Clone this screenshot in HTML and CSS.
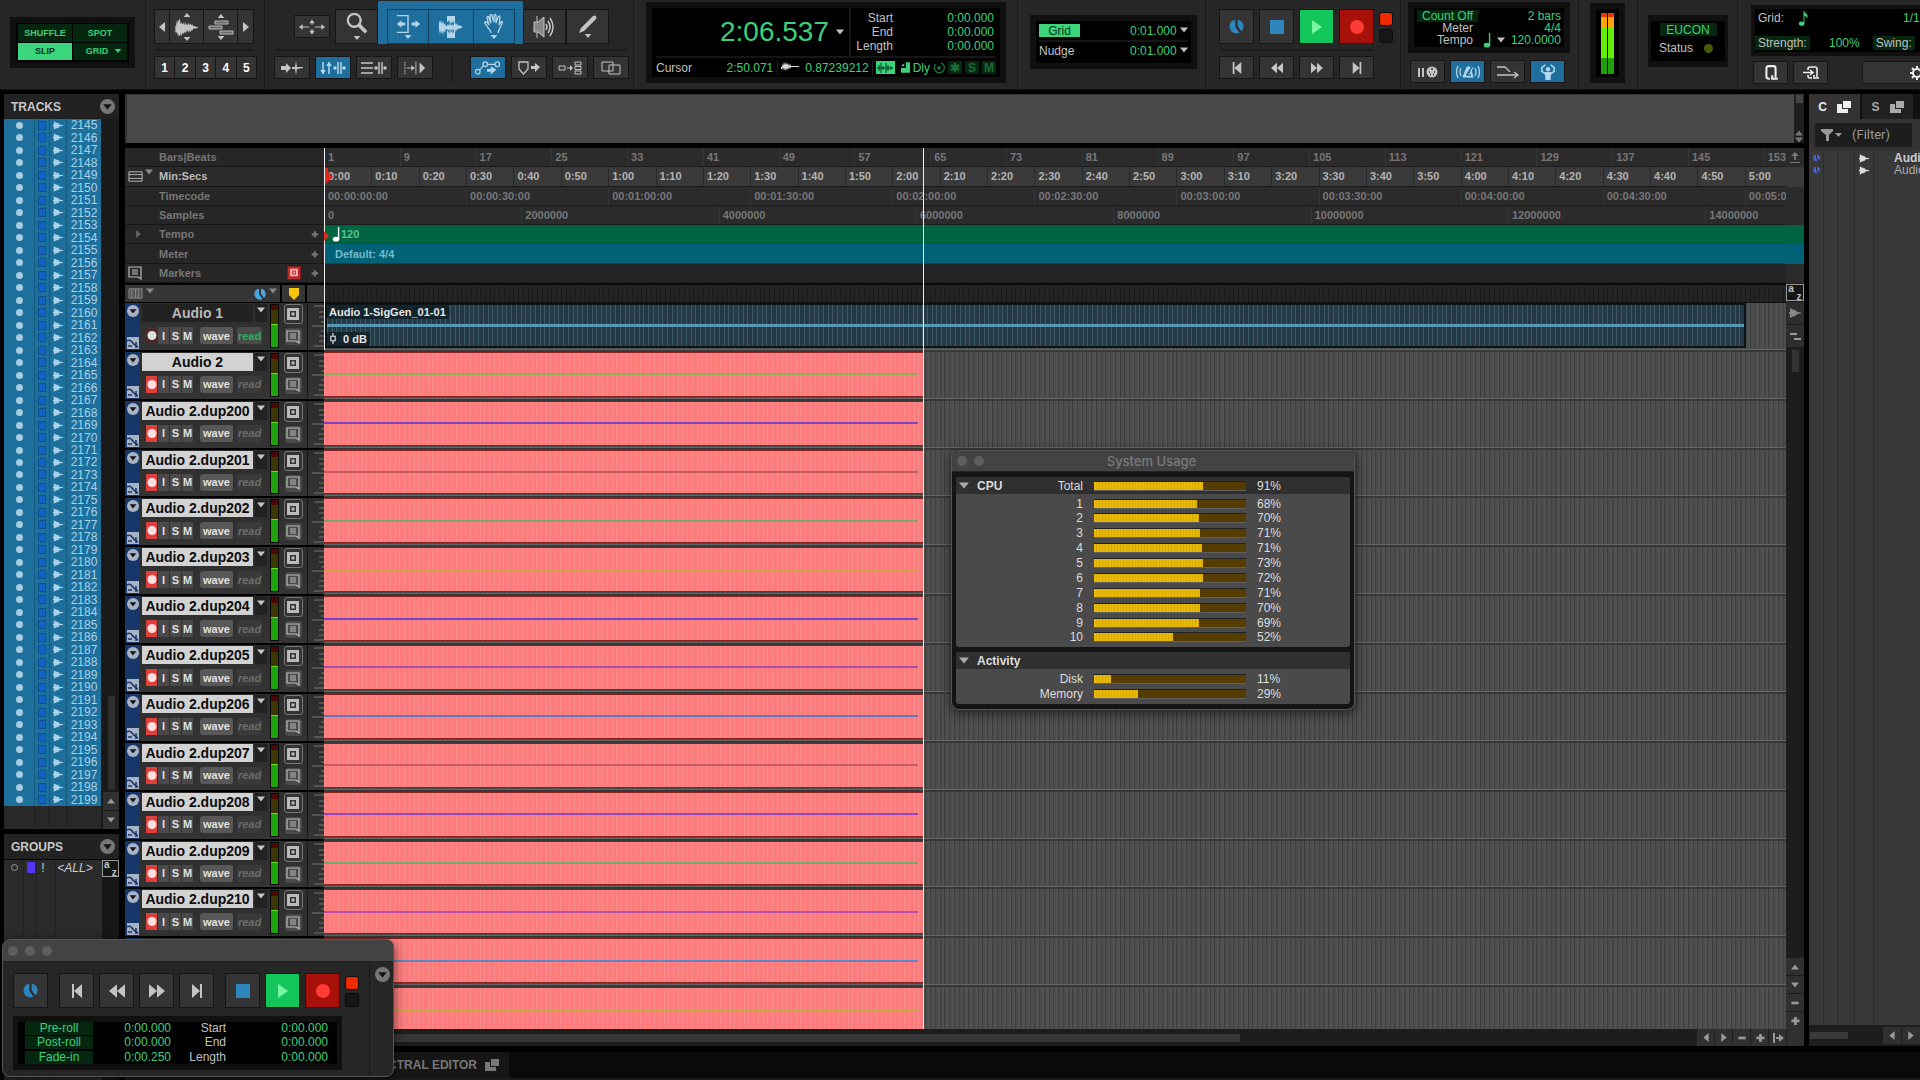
FILE: index.html
```
<!DOCTYPE html>
<html lang="en">
<head>
    <meta charset="UTF-8">
    <meta name="viewport" content="width=device-width, initial-scale=1.0">
    <title>Edit Window</title>
    <link rel="stylesheet" href="styles.css">
</head>
<body>
    <!-- icons -->
    <svg class="sprite" aria-hidden="true">
        <symbol id="down" viewBox="0 0 10 6"><path d="M0 0h10L5 6z"/></symbol>
        <symbol id="up" viewBox="0 0 10 6"><path d="M0 6h10L5 0z"/></symbol>
        <symbol id="left" viewBox="0 0 6 10"><path d="M6 0v10L0 5z"/></symbol>
        <symbol id="right" viewBox="0 0 6 10"><path d="M0 0v10l6-5z"/></symbol>
        <symbol id="minus" viewBox="0 0 10 10"><path d="M1 4h8v3H1z"/></symbol>
        <symbol id="plus" viewBox="0 0 10 10"><path d="M4 1h3v3h3v3H7v3H4V7H1V4h3z"/></symbol>
        <symbol id="jump" viewBox="0 0 12 10"><path d="M1 0h2v10H1zM4 4h3V1l5 4-5 4V6H4z"/></symbol>
        <symbol id="wave" viewBox="0 0 12 10"><path d="M0 4h1V0l2 1 1 1 1-1 1 2 1-1 1 2 4 .5v1L8 6 7 8 6 7 5 9 4 8 3 9l-2 1V6H0z"/></symbol>
        <symbol id="cwave" viewBox="0 0 18 12"><path d="M0 5h1V2l1 2 1-4 1 3 1-3 1 3 1-2 1 3 1-2 1 2h8v1h-8l-1 2-1-2-1 3-1-2-1 3-1-3-1 3-1-4-1 3V7H0z"/></symbol>
        <symbol id="bigwave" viewBox="0 0 26 20"><path d="M0 9h1V2l1 5 1-5 1 2 1-4 1 7 1-2 1 2 1-2 1 3 1-4 1 4 1-2 1 2 1-3 1 3 1-2 1 2 1-1 1 2 5 1v1l-5 1-1 2-1-1-1 3-1-2-1 2-1-3-1 3-1-2-1 4-1-3-1 3-1-2-1 4-1-3-1 5-1-4-1 2-1-4H0z"/></symbol>
        <symbol id="chipwave" viewBox="0 0 18 12"><path d="M1 6h16M3 3v6M5 1v10M7 4v4M10 1v10M12 3v6M15 4v4" fill="none" stroke="currentColor"/></symbol>
        <symbol id="bricks" viewBox="0 0 26 14"><path d="M7 1h13v3H7zM1 6h13v3H1zM12 11h13v3H12z" fill="#666" stroke="#bbb"/></symbol>
        <symbol id="arrows4" viewBox="0 0 28 16"><path d="M1 8h10M17 8h10M14 2v4M14 10v4" fill="none" stroke="currentColor"/><path d="M0 8l4-3v6zM28 8l-4-3v6zM14 0l3 4h-6zM14 16l3-4h-6z"/></symbol>
        <symbol id="zoomer" viewBox="0 0 24 24"><circle cx="9" cy="8" r="7" fill="none" stroke="currentColor" stroke-width="2.5"/><path d="M14 13l8 8" stroke="currentColor" stroke-width="4"/></symbol>
        <symbol id="trim" viewBox="0 0 28 20"><path d="M2 1h12v18H2" fill="none" stroke="currentColor" stroke-width="1.5"/><path d="M2 10l5-4v2.500h4v3H7V14zM27 10l-5-4v2.500h-4v3h4V14z"/></symbol>
        <symbol id="selector" viewBox="0 0 24 22"><path d="M8 0h8v7h-1l-1-2-1 3-1-3-1 4-1-5-1 2H8zM8 22h8v-7h-1l-1 3-1-4-1 3-1-3-1 4-1-3H8z"/><path d="M0 4l1 3 1-3 1 4 1-3 1 4 1-2 1 3h1l1-2 1 2 1-3 1 3 1-2 1 2 2-4 1 3 1-2 1 3 1-1 4 2-4 2-1-1-1 3-1-2-1 4-2-4-1 2-1-2-1 3-1-3-1 2-1-2H7l-1 4-1-3-1 5-1-4-1 3-1-4-1 4z"/></symbol>
        <symbol id="hand" viewBox="0 0 20 20"><path d="M7 19c0-3-3-4-4-7-1-2-3-3-2-4s3 1 4 3L3 4c0-2 2-2 2 0l2 5-1-7c0-2 2-2 2 0l2 6V2c0-2 2-2 2 0v7l2-6c1-2 2-1 2 0l-1 8 2-3c1-1 2 0 1 1-1 4-3 5-4 10" fill="none" stroke="currentColor" stroke-width="1.300"/></symbol>
        <symbol id="speaker" viewBox="0 0 22 24"><path d="M3 1v22" stroke="currentColor"/><path d="M0 7h4l6-5v20l-6-5H0z" fill="#888" stroke="currentColor"/><path d="M12 9q2 3 0 6M14 6q4 6 0 12M16 3q6 9 0 18" fill="none" stroke="currentColor" stroke-width="1.500"/></symbol>
        <symbol id="pencil" viewBox="0 0 18 18"><path d="M0 18l2-5L14 1q2-1 3 0t0 3L5 16zM3 14l1 1"/></symbol>
        <symbol id="tabto" viewBox="0 0 22 14"><path d="M0 5h5V2l5 5-5 5V9H0zM11 6h3l1-6 1 6h6v1l-6 1-1 6-1-6h-3z"/></symbol>
        <symbol id="linktl" viewBox="0 0 26 14"><path d="M3 1v12M9 1v12M18 1v12M21 1v12" stroke="currentColor" stroke-width="1.500"/><path d="M0 9h6l-3 4zM6 5h6L9 1z"/><circle cx="15" cy="7" r="1.800"/><circle cx="24" cy="7" r="1.800"/></symbol>
        <symbol id="linktr" viewBox="0 0 26 14"><path d="M0 2h12M0 7h12M0 12h12M18 1v12M21 1v12" stroke="currentColor" stroke-width="1.500"/><circle cx="15" cy="7" r="1.800"/><circle cx="24" cy="7" r="1.800"/></symbol>
        <symbol id="insertion" viewBox="0 0 24 14"><path d="M1 0v14" stroke="currentColor" stroke-dasharray="2 1"/><path d="M3 7h8M13 0v14" stroke="currentColor"/><path d="M8 4l4 3-4 3zM17 1v12l6-6z"/></symbol>
        <symbol id="automation" viewBox="0 0 28 14"><g fill="none" stroke="currentColor" stroke-width="1.300"><circle cx="3" cy="11" r="2.500"/><circle cx="11" cy="3" r="2.500"/><circle cx="24" cy="3" r="2.500"/><path d="M5 9l4-4M13 3h9"/></g><path d="M13 8h4V5l6 4-6 5v-3h-4z"/></symbol>
        <symbol id="markerto" viewBox="0 0 22 14"><path d="M1 1h9v7l-4.500 5L1 8z" fill="none" stroke="currentColor" stroke-width="1.300"/><path d="M13 5h4V2l5 4-5 5V8h-4z"/></symbol>
        <symbol id="mirror" viewBox="0 0 24 14"><path d="M1 5h6v4H1zM17 1h6v3h-6zM17 5.500h6v3h-6zM17 10h6v3h-6zM9 7h4" fill="none" stroke="currentColor"/><path d="M12 4l3 3-3 3z"/></symbol>
        <symbol id="layered" viewBox="0 0 20 14"><path d="M1 1h11v9H1zM8 4h11v9H8z" fill="none" stroke="currentColor"/></symbol>
        <symbol id="clock" viewBox="0 0 16 16"><circle cx="8" cy="8" r="7.500"/><path d="M8 0v8l5 7" fill="none" stroke="#2e2e2e" stroke-width="2.500"/></symbol>
        <symbol id="stop" viewBox="0 0 14 14"><path d="M0 0h14v14H0z"/></symbol>
        <symbol id="play" viewBox="0 0 10 14"><path d="M0 0l10 7-10 7z"/></symbol>
        <symbol id="rec" viewBox="0 0 14 14"><circle cx="7" cy="7" r="7"/></symbol>
        <symbol id="rtz" viewBox="0 0 10 14"><path d="M0 0h2v14H0zM10 0v14L2 7z"/></symbol>
        <symbol id="rew" viewBox="0 0 14 12"><path d="M7 0v12L0 6zM14 0v12L7 6z"/></symbol>
        <symbol id="ffw" viewBox="0 0 14 12"><path d="M0 0l7 6-7 6zM7 0l7 6-7 6z"/></symbol>
        <symbol id="end" viewBox="0 0 10 14"><path d="M8 0h2v14H8zM0 0l8 7-8 7z"/></symbol>
        <symbol id="note" viewBox="0 0 8 16"><path d="M6 0h1.500v13H6z"/><ellipse cx="4" cy="13" rx="3.500" ry="2.500"/></symbol>
        <symbol id="note16" viewBox="0 0 10 16"><path d="M5 0h1q0 2 2 3t1 5q0-2-3-3v8H5zM6 4q3 1 4 4"/><ellipse cx="3" cy="13.500" rx="3" ry="2.200"/></symbol>
        <symbol id="waitnote" viewBox="0 0 20 12"><path d="M0 2h2v9H0zM4 2h2v9H4z"/><circle cx="14" cy="6" r="5.500"/><path d="M11 6h1M13 3h2M16 6h1M12 8.500h1M15 8.500h1" stroke="#333" stroke-width="1.500"/></symbol>
        <symbol id="metronome" viewBox="0 0 26 14"><path d="M3 1q-3 6 0 12M6 3q-2 4 0 8M23 1q3 6 0 12M20 3q2 4 0 8" fill="none" stroke="currentColor" stroke-width="1.300"/><path d="M12 2h3l3 10H8zM12 9h3l3-7" stroke="currentColor"/><path d="M12 9l5-7M11 10h5" stroke="#1e6e9e" stroke-width="1.300"/></symbol>
        <symbol id="merge" viewBox="0 0 22 14"><path d="M0 2h8l5 5M0 10h20M17 7l4 3-4 3" fill="none" stroke="currentColor" stroke-width="1.300"/></symbol>
        <symbol id="conductor" viewBox="0 0 18 16"><path d="M6 0L2 3v4l5 4v5h4v-5l5-4V3l-4-3" fill="none" stroke="currentColor" stroke-width="1.800"/><circle cx="9" cy="5" r="2.500"/><path d="M5 8h8l-2 8H7z"/></symbol>
        <symbol id="quant" viewBox="0 0 12 14"><path d="M5 12H4q-2 0-2-2V3q0-2 2-2h4q2 0 2 2v8M7 9v3h5" fill="none" stroke="currentColor" stroke-width="1.800"/></symbol>
        <symbol id="inquant" viewBox="0 0 16 14"><path d="M5 4V3q0-2 2-2h5q2 0 2 2v8M11 9v3h5M9 12H7q-2 0-2-2V9M0 6.500h10M7 4l3 2.500L7 9" fill="none" stroke="currentColor" stroke-width="1.600"/></symbol>
        <symbol id="popout" viewBox="0 0 14 12"><path d="M0 3h5v5h6v4H0zM6 0h8v7H6z"/></symbol>
        <symbol id="funnel" viewBox="0 0 12 12"><path d="M0 0h12v2L8 6v6H5V6L0 2z"/></symbol>
        <symbol id="rows" viewBox="0 0 16 12"><path d="M1 1h14v10H1zM1 4h14M1 8h14" fill="none" stroke="currentColor"/></symbol>
        <symbol id="cols" viewBox="0 0 16 12"><path d="M1 1h14v10H1zM4 1v10M8 1v10M11 1v10" fill="#555" stroke="currentColor"/></symbol>
        <symbol id="comment" viewBox="0 0 14 14"><path d="M1 1h12v12l-3-2H1zM4 4h6M4 6h6M4 8h6" fill="none" stroke="currentColor" stroke-width="1.200"/></symbol>
        <symbol id="frame" viewBox="0 0 14 14"><path d="M1 1h12v12H1zM4 4v6h6V4z" fill-rule="evenodd"/><path d="M5.500 5.500h3v3h-3z"/></symbol>
        <symbol id="flag" viewBox="0 0 10 12"><path d="M0 0h10v7l-5 5-5-5z"/></symbol>
        <symbol id="menu" viewBox="0 0 14 14"><circle cx="7" cy="7" r="7"/><path d="M3 5h8l-4 5z" fill="#141414"/></symbol>
        <symbol id="elastic" viewBox="0 0 12 12"><path d="M0 0h12v12H0z"/><path d="M0 4q3-2 5 1t6 5M9 5v6M1 9h4" fill="none" stroke="#17366a" stroke-width="1.500"/></symbol>
        <symbol id="scale" viewBox="0 0 12 42"><path d="M2 1h10M7 7h5M7 12h5M9 17h3M0 21h12M9 26h3M7 31h5M7 36h5M2 41h10" stroke="#777" fill="none"/></symbol>
        <symbol id="fader" viewBox="0 0 6 10"><path d="M3 0v3M3 7v3M1 3h4v4H1z" fill="none" stroke="currentColor"/></symbol>
        <symbol id="upload" viewBox="0 0 10 12"><path d="M5 0l4 4H6v4H4V4H1zM0 10h10v1H0z"/></symbol>
        <symbol id="ring" viewBox="0 0 12 12"><path d="M3 2a5 5 0 1 0 5-1" fill="none" stroke="currentColor" stroke-width="1.500"/><circle cx="6" cy="6" r="2"/></symbol>
        <symbol id="corner" viewBox="0 0 11 13"><path d="M6 0h5v13H0V7h6zM0 5l4-4v4z"/></symbol>
        <symbol id="gear" viewBox="0 0 14 14"><circle cx="7" cy="7" r="4" fill="none" stroke="currentColor" stroke-width="2"/><path d="M7 0v3M7 11v3M0 7h3M11 7h3M2 2l2 2M10 10l2 2M12 2l-2 2M4 10l-2 2" stroke="currentColor" stroke-width="2"/></symbol>
    </svg>

    <header class="toolbar">
        <section class="sec modes-sec">
            <div class="lcd modes">
                <button>SHUFFLE</button>
                <button>SPOT</button>
                <button class="lit">SLIP</button>
                <button>GRID <svg class="i-tri"><use href="#down"/></svg></button>
            </div>
        </section>

        <section class="sec presets-sec">
            <div class="row1 joined">
                <button class="b15"><svg class="i-side"><use href="#left"/></svg></button>
                <button class="b35 stack"><svg class="i-tri"><use href="#up"/></svg><svg class="i-wave"><use href="#bigwave"/></svg><svg class="i-tri"><use href="#down"/></svg></button>
                <button class="b35 stack"><svg class="i-tri"><use href="#up"/></svg><svg class="i-brick"><use href="#bricks"/></svg><svg class="i-tri"><use href="#down"/></svg></button>
                <button class="b16"><svg class="i-side"><use href="#right"/></svg></button>
            </div>
            <hr>
            <div class="row2 joined numbers">
                <button>1</button><button>2</button><button>3</button><button>4</button><button>5</button>
            </div>
        </section>

        <section class="sec tools-sec">
            <div class="row1">
                <button class="b36 zoomtoggle"><svg class="i-28"><use href="#arrows4"/></svg></button>
                <button class="tool stack"><svg class="i-22"><use href="#zoomer"/></svg><svg class="i-tri"><use href="#down"/></svg></button>
                <div class="smart">
                    <button class="on stack"><svg class="i-28"><use href="#trim"/></svg><svg class="i-tri"><use href="#down"/></svg></button>
                    <button class="on"><svg class="i-24"><use href="#selector"/></svg></button>
                    <button class="on stack"><svg class="i-20"><use href="#hand"/></svg><svg class="i-tri"><use href="#down"/></svg></button>
                </div>
                <button class="tool"><svg class="i-24"><use href="#speaker"/></svg></button>
                <button class="tool stack"><svg class="i-18"><use href="#pencil"/></svg><svg class="i-tri"><use href="#down"/></svg></button>
            </div>
            <hr>
            <div class="row2 spread">
                <div class="gap5">
                    <button class="b36"><svg class="i-22"><use href="#tabto"/></svg></button>
                    <button class="b36 on"><svg class="i-28"><use href="#linktl"/></svg></button>
                    <button class="b36"><svg class="i-28"><use href="#linktr"/></svg></button>
                    <button class="b36"><svg class="i-22"><use href="#insertion"/></svg></button>
                </div>
                <span class="vline"></span>
                <div class="gap5">
                    <button class="b36 on"><svg class="i-28"><use href="#automation"/></svg></button>
                    <button class="b36"><svg class="i-22"><use href="#markerto"/></svg></button>
                    <button class="b36"><svg class="i-24"><use href="#mirror"/></svg></button>
                    <button class="b36"><svg class="i-20"><use href="#layered"/></svg></button>
                </div>
            </div>
        </section>

        <section class="sec counter-sec">
            <div class="lcd counter">
                <div class="counter-top">
                    <div class="main-time">2:06.537 <svg class="i-8"><use href="#down"/></svg></div>
                    <dl class="sel">
                        <dt>Start</dt><dd>0:00.000</dd>
                        <dt>End</dt><dd>0:00.000</dd>
                        <dt>Length</dt><dd>0:00.000</dd>
                    </dl>
                </div>
                <div class="counter-bottom">
                    <span class="grey">Cursor</span>
                    <span class="cur-time">2:50.071</span>
                    <svg class="i-cwave"><use href="#cwave"/></svg>
                    <span class="cur-val">0.87239212</span>
                    <span class="chip lit"><svg class="i-18"><use href="#chipwave"/></svg></span>
                    <svg class="i-corner"><use href="#corner"/></svg>
                    <span>Dly</span>
                    <svg class="i-12 dim"><use href="#ring"/></svg>
                    <span class="chip">✱</span><span class="chip">S</span><span class="chip">M</span>
                </div>
            </div>
        </section>

        <section class="sec grid-sec">
            <div class="lcd gridbox">
                <div class="grid-row"><button class="lit">Grid</button><span>0:01.000 <svg class="i-8"><use href="#down"/></svg></span></div>
                <div class="grid-row"><span class="grey">Nudge</span><span>0:01.000 <svg class="i-8"><use href="#down"/></svg></span></div>
            </div>
        </section>

        <section class="sec transport-sec">
            <div class="row1 gap5">
                <button class="b35 blue"><svg class="i-15"><use href="#clock"/></svg></button>
                <button class="b35 blue"><svg class="i-14"><use href="#stop"/></svg></button>
                <button class="b35 play"><svg class="i-14"><use href="#play"/></svg></button>
                <button class="b35 rec"><svg class="i-14"><use href="#rec"/></svg></button>
                <div class="leds"><i class="led lit"></i><i class="led"></i></div>
            </div>
            <hr>
            <div class="row2 gap5">
                <button class="b35"><svg class="i-12"><use href="#rtz"/></svg></button>
                <button class="b35"><svg class="i-12"><use href="#rew"/></svg></button>
                <button class="b35"><svg class="i-12"><use href="#ffw"/></svg></button>
                <button class="b35"><svg class="i-12"><use href="#end"/></svg></button>
            </div>
        </section>

        <section class="sec tempo-sec">
            <div class="lcd tempo">
                <div><button class="dimlit">Count Off</button><span>2 bars</span></div>
                <div><span class="grey tlabel">Meter</span><span>4/4</span></div>
                <div><span class="grey tlabel">Tempo</span><svg class="i-note"><use href="#note"/></svg><svg class="i-8 grey"><use href="#down"/></svg><span class="push">120.0000</span></div>
            </div>
            <div class="row3 gap5">
                <button class="b35"><svg class="i-20"><use href="#waitnote"/></svg></button>
                <button class="b35 on"><svg class="i-28"><use href="#metronome"/></svg></button>
                <button class="b35"><svg class="i-22"><use href="#merge"/></svg></button>
                <button class="b35 on"><svg class="i-16"><use href="#conductor"/></svg></button>
            </div>
        </section>

        <section class="sec meter-sec">
            <div class="lcd mainmeter"><i></i><i></i></div>
        </section>

        <section class="sec eucon-sec">
            <div class="lcd eucon">
                <button class="dimlit">EUCON</button>
                <div class="status"><span class="grey">Status</span><i></i></div>
            </div>
        </section>

        <section class="sec quant-sec">
            <div class="lcd quant">
                <div><span class="grey">Grid:</span><svg class="i-note"><use href="#note16"/></svg><span class="qval">1/16</span></div>
                <div><button class="dimlit pale">Strength:</button><span class="pct">100%</span><button class="dimlit pale">Swing:</button></div>
            </div>
            <div class="row3 gap5">
                <button class="b35 white"><svg class="i-16"><use href="#quant"/></svg></button>
                <button class="b35 white"><svg class="i-16"><use href="#inquant"/></svg></button>
                <button class="wide white"><svg class="i-14"><use href="#gear"/></svg></button>
            </div>
        </section>
    </header>

    <main class="work">
        <aside class="side">
            <div class="side-head"><h2>TRACKS</h2><button class="round"><svg class="i-15"><use href="#menu"/></svg></button></div>
            <div class="tracklist">
                <div class="tl-body"><ul id="tracklist"></ul></div>
                <div class="tl-scroll">
                    <span class="thumb"></span>
                    <button class="sb"><svg class="i-8"><use href="#up"/></svg></button>
                    <button class="sb"><svg class="i-8"><use href="#down"/></svg></button>
                </div>
            </div>
            <div class="side-head groups-head"><h2>GROUPS</h2><button class="round"><svg class="i-15"><use href="#menu"/></svg></button></div>
            <div class="groups">
                <div class="group-row"><span class="gdot"><i></i></span><span class="gcolor"><i></i></span><span>!</span><em>&lt;ALL&gt;</em></div>
                <div class="gcol"><button class="az"><span>a</span><span>z</span></button></div>
            </div>
        </aside>

        <div class="center">
            <div class="edit">
                <div class="overview"><div class="ov-body"></div><div class="ov-scroll"><i></i><svg class="i-8"><use href="#up"/></svg><svg class="i-8"><use href="#down"/></svg></div></div>

                <div class="edit-grid">
                    <div class="heads">
                        <div class="ruler-heads">
                            <div><span></span><span>Bars|Beats</span></div>
                            <div class="sel-ruler"><span class="rh-ic"><svg class="i-15"><use href="#rows"/></svg><svg class="i-8"><use href="#down"/></svg></span><span>Min:Secs</span></div>
                            <div><span></span><span>Timecode</span></div>
                            <div><span></span><span>Samples</span></div>
                            <div><span class="rh-ic mid"><svg class="i-7"><use href="#right"/></svg></span><span>Tempo</span><svg class="i-7 add"><use href="#plus"/></svg></div>
                            <div><span></span><span>Meter</span><svg class="i-7 add"><use href="#plus"/></svg></div>
                            <div><span class="rh-ic"><svg class="i-14"><use href="#comment"/></svg></span><span>Markers</span><button class="mk" aria-label="Marker options"><svg class="i-10"><use href="#frame"/></svg></button><svg class="i-7 add"><use href="#plus"/></svg></div>
                        </div>
                        <div class="view-row">
                            <div class="vr-main"><svg class="i-15"><use href="#cols"/></svg><svg class="i-8"><use href="#down"/></svg><svg class="i-12 cyan"><use href="#clock"/></svg><svg class="i-8"><use href="#down"/></svg></div>
                            <div class="vr-flag"><svg class="i-12"><use href="#flag"/></svg></div>
                            <div class="vr-end"></div>
                        </div>
                        <div class="rows-clip"><div class="rows" id="heads"></div></div>
                    </div>

                    <div class="timeline">
                        <div class="rulers">
                            <div class="ruler bars" id="bars"></div>
                            <div class="ruler mins" id="mins"></div>
                            <div class="ruler tc" id="timecode"></div>
                            <div class="ruler samples" id="samples"></div>
                            <div class="ruler tempo-ruler"><svg class="i-note"><use href="#note"/></svg>120</div>
                            <div class="ruler meter-ruler">Default: 4/4</div>
                            <div class="ruler"></div>
                        </div>
                        <div class="dark-strip"></div>
                        <div class="rows-clip lanes"><div class="rows" id="lanes"></div></div>
                        <i class="playhead"></i>
                        <i class="editcursor"></i>
                        <svg class="startmark" viewBox="0 0 8 16"><path d="M0 0h3v4l5 5-8 7z"/></svg>
                        <svg class="tempomark" viewBox="0 0 6 12"><path d="M0 0l6 6-6 6z"/></svg>
                    </div>

                    <div class="edge">
                        <div class="edge-rulers">
                            <div><svg class="i-12"><use href="#upload"/></svg></div>
                            <div class="e2"></div><div></div><div></div>
                            <div class="e-green"></div><div class="e-teal"></div><div></div>
                        </div>
                        <button class="az"><span>a</span><span>z</span></button>
                        <button class="ebtn"><svg class="i-12"><use href="#wave"/></svg></button>
                        <button class="ebtn two"><i></i><i></i></button>
                        <div class="etrack"><i></i></div>
                        <button class="sb"><svg class="i-8"><use href="#up"/></svg></button>
                        <button class="sb"><svg class="i-8"><use href="#down"/></svg></button>
                        <button class="sb"><svg class="i-10"><use href="#minus"/></svg></button>
                        <button class="sb"><svg class="i-10"><use href="#plus"/></svg></button>
                    </div>
                </div>

                <div class="hscroll">
                    <div class="htrack"><i></i></div>
                    <button class="sb"><svg class="i-10"><use href="#left"/></svg></button>
                    <button class="sb"><svg class="i-10"><use href="#right"/></svg></button>
                    <button class="sb"><svg class="i-10"><use href="#minus"/></svg></button>
                    <button class="sb"><svg class="i-10"><use href="#plus"/></svg></button>
                    <button class="sb"><svg class="i-12"><use href="#jump"/></svg></button>
                    <span class="sb"></span>
                </div>
            </div>

            <aside class="clips">
                <div class="tabs">
                    <button class="tab active">C <svg class="i-14"><use href="#popout"/></svg></button>
                    <button class="tab">S <svg class="i-14"><use href="#popout"/></svg></button>
                </div>
                <div class="filter"><svg class="i-12"><use href="#funnel"/></svg><svg class="i-7"><use href="#down"/></svg><input type="text" placeholder="(Filter)" aria-label="Filter clips"></div>
                <ul class="cliplist">
                    <li class="strong"><svg class="i-7 indigo"><use href="#clock"/></svg><svg class="i-10"><use href="#wave"/></svg><span>Audio 1</span></li>
                    <li><svg class="i-7 indigo"><use href="#clock"/></svg><svg class="i-10"><use href="#wave"/></svg><span>Audio 1</span></li>
                </ul>
                <div class="cscroll"><i></i><button class="sb"><svg class="i-10"><use href="#left"/></svg></button><button class="sb"><svg class="i-10"><use href="#right"/></svg></button></div>
            </aside>

            <footer class="docktabs"><button>SPECTRAL EDITOR <svg class="i-14"><use href="#popout"/></svg></button></footer>
        </div>
    </main>

    <!-- floating windows -->
    <section class="win usage">
        <header><i></i><i></i><h3>System Usage</h3></header>
        <div class="usage-body">
            <table class="ubox">
                <thead><tr><th><svg class="i-tri2"><use href="#down"/></svg>CPU<span>Total</span></th><td><div class="bar"><i style="width:72%"></i></div></td><td>91%</td></tr></thead>
                <tbody id="cpu"></tbody>
            </table>
            <table class="ubox act">
                <thead><tr><th><svg class="i-tri2"><use href="#down"/></svg>Activity</th><td></td><td></td></tr></thead>
                <tbody id="activity"></tbody>
            </table>
        </div>
    </section>

    <section class="win transport">
        <header><i></i><i></i><i></i></header>
        <div class="tr-body">
            <div class="tr-main">
                <div class="tr-buttons">
                    <button class="b35 blue"><svg class="i-15"><use href="#clock"/></svg></button>
                    <div class="gap5">
                        <button class="b35"><svg class="i-14"><use href="#rtz"/></svg></button>
                        <button class="b35"><svg class="i-16"><use href="#rew"/></svg></button>
                        <button class="b35"><svg class="i-16"><use href="#ffw"/></svg></button>
                        <button class="b35"><svg class="i-14"><use href="#end"/></svg></button>
                    </div>
                    <div class="gap5">
                        <button class="b35 blue"><svg class="i-14"><use href="#stop"/></svg></button>
                        <button class="b35 play"><svg class="i-14"><use href="#play"/></svg></button>
                        <button class="b35 rec"><svg class="i-14"><use href="#rec"/></svg></button>
                        <div class="leds"><i class="led lit"></i><i class="led"></i></div>
                    </div>
                </div>
                <div class="lcd rolls">
                    <button class="dimlit">Pre-roll</button><span>0:00.000</span><span class="grey rl">Start</span><span>0:00.000</span>
                    <button class="dimlit">Post-roll</button><span>0:00.000</span><span class="grey rl">End</span><span>0:00.000</span>
                    <button class="dimlit">Fade-in</button><span>0:00.250</span><span class="grey rl">Length</span><span>0:00.000</span>
                </div>
            </div>
            <div class="tr-side"><button class="round"><svg class="i-15"><use href="#menu"/></svg></button></div>
        </div>
    </section>

    <script src="app.js"></script>
</body>
</html>
```

FILE: styles.css
```
*{
    box-sizing: border-box;
    margin: 0;
    padding: 0;
}

body{
    height: 100vh;
    display: flex;
    flex-direction: column;
    overflow: hidden;
    background-color: #000;
    color: #c0c0c0;
    font-family: "Liberation Sans", Arial, sans-serif;
    font-size: 12px;
    line-height: 14px;
}

button{
    display: flex;
    align-items: center;
    justify-content: center;
    border: 1px solid #161616;
    background-color: #343434;
    color: #c4c4c4;
    font: inherit;
    flex-shrink: 0;
}

ul{
    list-style: none;
}

svg{
    fill: currentColor;
    flex-shrink: 0;
}

.sprite{
    display: none;
}

/* icon sizes */
.i-tri{ width: 8px; height: 4px; }
.i-tri2{ width: 10px; height: 9px; }
.i-side{ width: 6px; height: 10px; }
.i-7{ width: 7px; height: 8px; }
.i-8{ width: 8px; height: 6px; }
.i-10{ width: 10px; height: 9px; }
.i-12{ width: 12px; height: 12px; }
.i-14{ width: 14px; height: 14px; }
.i-15{ width: 15px; height: 15px; }
.i-16{ width: 16px; height: 16px; }
.i-18{ width: 18px; height: 18px; }
.i-20{ width: 20px; height: 20px; }
.i-22{ width: 22px; height: 22px; }
.i-24{ width: 24px; height: 24px; }
.i-28{ width: 26px; height: 20px; }
.i-wave{ width: 26px; height: 18px; }
.i-brick{ width: 26px; height: 16px; }
.i-note{ width: 8px; height: 15px; }
.i-cwave{ width: 18px; height: 12px; color: #ddd; }
.i-corner{ width: 9px; height: 13px; }

.grey{ color: #c0c0c0; }
.blue{ color: #2f86bd; }
.cyan{ color: #4aa8e0; }
.indigo{ color: #4a63d8; }
.white{ color: #eee; }
.dim{ color: #1b6b3c; }

/* ---------- toolbar ---------- */
.toolbar{
    display: flex;
    height: 90px;
    flex-shrink: 0;
    overflow: hidden;
    background-color: #262626;
    border-bottom: 1px solid #111;
}

.sec{
    flex-shrink: 0;
    border-right: 1px solid #1a1a1a;
}

.sec hr{
    border: 0;
    height: 2px;
    margin: 5px 2px;
    background-color: #1c1c1c;
}

.row1{
    display: flex;
    height: 35px;
}

.row2{
    display: flex;
    height: 23px;
}

.row3{
    display: flex;
    height: 23px;
    margin-top: 7px;
}

.gap5{
    display: flex;
    gap: 5px;
}

.b15{ width: 16px; }
.b16{ width: 17px; }
.b35{ width: 35px; }
.b36{ width: 36px; }

.on{
    background-color: #1e6e9e;
    color: #b5d6ea;
}

.stack{
    flex-direction: column;
    gap: 1px;
}

.lcd{
    background-color: #000;
    border: 6px solid #101010;
    color: #3fcf7c;
}

.lcd button{
    border: 0;
}

.lcd .dimlit{
    background-color: #05260f;
    color: #3fcf7c;
}

.lcd .pale{
    color: #c0c0c0;
}

.modes-sec{
    width: 146px;
    padding: 17px 10px 0;
}

.modes{
    display: grid;
    grid-template-columns: 1fr 1fr;
    gap: 1px;
    height: 51px;
    padding: 1px 2px 2px;
}

.modes button{
    background-color: #05260f;
    color: #3fcf7c;
    font-size: 9px;
    font-weight: bold;
    gap: 6px;
    line-height: 10px;
}

.modes .i-tri{
    margin-right: -8px;
}

.lcd .lit{
    background-color: #3bd57b;
    color: #04361a;
}

.presets-sec{
    width: 119px;
    padding: 9px 8px 0;
}

.joined button{
    margin-right: -1px;
}

.numbers button{
    flex: 1;
    color: #fff;
    font-weight: bold;
}

.tools-sec{
    width: 369px;
    padding: 9px 4px 0 9px;
}

.zoomtoggle{
    height: 23px;
    margin: 6px 5px 0 20px;
}

.tool{
    width: 43px;
}

.smart{
    display: flex;
    margin-top: -8px;
    padding: 8px 9px 0;
    background-color: #1e6e9e;
    border-radius: 2px 2px 0 0;
}

.smart button{
    width: 42px;
    margin-right: -1px;
    border-color: #103f5c;
}

.smart button:nth-child(2){
    width: 46px;
}

.spread{
    justify-content: space-between;
}

.vline{
    width: 2px;
    height: 28px;
    margin-top: -2px;
    background-color: #1c1c1c;
}

.counter-sec{
    width: 384px;
    padding: 2px 11px 0 12px;
}

.counter{
    height: 81px;
    padding: 0 4px;
}

.counter-top{
    display: flex;
    height: 50px;
    border-bottom: 2px solid #161616;
}

.main-time{
    display: flex;
    align-items: center;
    justify-content: flex-end;
    gap: 7px;
    width: 195px;
    padding-right: 5px;
    font-size: 28px;
    border-right: 2px solid #161616;
}

.main-time svg{
    color: #c0c0c0;
}

.sel{
    flex: 1;
    display: grid;
    grid-template-columns: 42px 1fr;
    align-content: center;
    text-align: right;
    padding-right: 2px;
}

.sel dt{
    color: #c0c0c0;
}

.counter-bottom{
    display: flex;
    align-items: center;
    height: 19px;
    gap: 3px;
}

.cur-time{
    flex: 1;
    text-align: right;
    padding-right: 4px;
    border-right: 1px solid #222;
}

.cur-val{
    padding: 0 3px;
    border-right: 1px solid #222;
}

.chip{
    display: flex;
    align-items: center;
    justify-content: center;
    width: 14px;
    height: 13px;
    background-color: #05260f;
    color: #1b6b3c;
    font-weight: bold;
}

.chip.lit{
    width: 19px;
    margin-right: 3px;
}

.grid-sec{
    width: 188px;
    padding: 15px 8px 0 12px;
}

.gridbox{
    height: 54px;
    padding: 0 3px;
}

.grid-row{
    display: flex;
    justify-content: space-between;
    align-items: center;
    height: 19px;
}

.grid-row + .grid-row{
    height: 20px;
    border-top: 2px solid #161616;
}

.grid-row button{
    width: 41px;
    height: 13px;
}

.grid-row svg{
    color: #c0c0c0;
    margin-bottom: 2px;
}

.transport-sec{
    width: 195px;
    padding: 9px 8px 0 13px;
}

.transport-sec hr{
    margin-right: 18px;
}

.play{
    background-color: #12c65c;
    color: #77f5a5;
}

.rec{
    background-color: #a81109;
    color: #ff3b33;
}

.leds{
    display: flex;
    flex-direction: column;
    gap: 3px;
    padding-top: 3px;
}

.led{
    width: 14px;
    height: 14px;
    border: 1px solid #0c0c0c;
    border-radius: 3px;
    background-color: #161616;
}

.led.lit{
    background-color: #f02a00;
}

.tempo-sec{
    width: 178px;
    padding: 2px 8px 0 7px;
}

.tempo{
    height: 51px;
    padding: 2px 3px 0;
}

.tempo div{
    display: flex;
    justify-content: space-between;
    align-items: center;
    height: 12px;
}

.tempo .dimlit{
    height: 12px;
    padding: 0 5px;
}

.tempo .tlabel{
    width: 56px;
    text-align: right;
}

.tempo .i-note{
    margin-left: 4px;
}

.tempo-sec .row3{
    padding-left: 2px;
}

.meter-sec{
    width: 59px;
    padding: 3px 12px 0 11px;
}

.mainmeter{
    display: flex;
    justify-content: center;
    gap: 1px;
    height: 80px;
    padding: 4px 0 3px;
}

.mainmeter i{
    width: 6px;
    background: linear-gradient(#e8380c 0 4px, #ffa50a 4px 15px, #63ee08 15px 45px, #1f9f0c 45px);
}

.eucon-sec{
    width: 100px;
    padding: 15px 9px 0 10px;
}

.eucon{
    height: 52px;
    padding: 2px 5px;
    border-width: 6px 3px;
}

.eucon button{
    width: 57px;
    height: 13px;
    margin: 0 auto;
}

.status{
    display: flex;
    justify-content: space-between;
    align-items: center;
    padding: 4px 7px 0 3px;
    margin-top: 1px;
}

.status i{
    width: 9px;
    height: 9px;
    border-radius: 50%;
    background-color: #465c0a;
}

.quant-sec{
    flex: 1;
    min-width: 0;
    overflow: hidden;
    padding: 5px 0 0 13px;
    border: 0;
}

.quant{
    width: 240px;
    height: 51px;
    border-width: 4px;
    padding: 1px 0;
}

.quant div{
    display: flex;
    align-items: center;
    height: 16px;
    padding-left: 3px;
}

.quant div + div{
    margin-top: 9px;
    padding-left: 0;
}

.quant .i-note{
    margin: 0 0 0 14px;
    width: 11px;
}

.qval{
    margin-left: 94px;
}

.quant button{
    height: 14px;
    padding: 0 3px;
}

.pct{
    width: 50px;
    text-align: right;
    margin-right: 13px;
}

.quant-sec .row3{
    margin-top: 5px;
    padding-left: 2px;
}

.wide{
    width: 110px;
    margin-left: 29px;
}

/* ---------- work area ---------- */
.work{
    flex: 1;
    min-height: 0;
    display: flex;
    padding-top: 4px;
    gap: 6px;
}

.side{
    width: 119px;
    padding-left: 4px;
    display: flex;
    flex-direction: column;
    flex-shrink: 0;
}

.side-head{
    display: flex;
    align-items: center;
    justify-content: space-between;
    height: 25px;
    flex-shrink: 0;
    padding: 0 4px 0 7px;
    background-color: #222;
}

.side-head h2{
    font-size: 12px;
    color: #c8c8c8;
}

.round{
    border: 0;
    background: none;
    color: #777;
}

.tracklist{
    display: flex;
    height: 710px;
    flex-shrink: 0;
    gap: 2px;
    background-color: #1a1a1a;
}

.tl-body{
    flex: 1;
    background: linear-gradient(90deg, #282828 30px, #1e1e1e 30px 31px, #282828 31px 45px, #1e1e1e 45px 46px, #282828 46px 62px, #1e1e1e 62px 63px, #282828 63px);
}

#tracklist{
    display: grid;
    grid-auto-rows: 1fr;
    height: 687px;
    background-color: #1d6f9c;
    color: #a9d3ea;
    overflow: hidden;
}

#tracklist li{
    display: grid;
    grid-template-columns: 31px 15px 17px 1fr;
    align-items: center;
    justify-items: center;
    line-height: 12px;
    min-height: 0;
}

#tracklist li > *{
    border-right: 1px solid #175a80;
}

#tracklist .dot,
#tracklist .chipcell,
#tracklist .wv{
    width: 100%;
    height: 100%;
    display: flex;
    align-items: center;
    justify-content: center;
}

.dot i{
    width: 7px;
    height: 7px;
    border-radius: 50%;
    background-color: #a9cde0;
}

.chipcell i{
    width: 8px;
    height: 9px;
    background-color: #1263c4;
    border: 1px solid #0f4f8c;
}

#tracklist b{
    font-weight: normal;
    border: 0;
}

.tl-scroll{
    width: 16px;
    display: flex;
    flex-direction: column;
    align-items: stretch;
    justify-content: flex-end;
    gap: 1px;
}

.thumb{
    width: 7px;
    height: 94px;
    margin: 0 auto 1px;
    background-color: #303030;
}

.sb{
    width: 18px;
    height: 17px;
    border: 0;
    background-color: #303030;
    color: #999;
}

.tl-scroll .sb{
    width: 16px;
    height: 18px;
}

.groups-head{
    margin-top: 5px;
}

.groups{
    flex: 1;
    display: flex;
    margin-top: 1px;
    background: linear-gradient(90deg, #2b2b2b 19px, #222 19px 20px, #2b2b2b 20px 32px, #222 32px 33px, #2b2b2b 33px 51px, #222 51px 52px, #2b2b2b 52px);
}

.group-row{
    flex: 1;
    display: grid;
    grid-template-columns: 20px 14px 10px 1fr;
    height: 15px;
    align-items: center;
    justify-items: center;
    color: #ccc;
}

.gdot i{
    display: block;
    width: 7px;
    height: 7px;
    border: 1px solid #999;
    border-radius: 50%;
}

.gcolor i{
    display: block;
    width: 8px;
    height: 11px;
    background-color: #5436f2;
}

.gcol{
    width: 17px;
    background-color: #171717;
}

.az{
    width: 17px;
    height: 17px;
    display: grid;
    grid-template-columns: 1fr 1fr;
    border: 1px solid #999;
    background-color: #161616;
    font-size: 10px;
    font-weight: bold;
    line-height: 7px;
}

.az span:last-child{
    align-self: end;
}

.az span:first-child{
    align-self: start;
}

.center{
    flex: 1;
    min-width: 0;
    display: grid;
    grid-template-columns: 1fr 111px;
    grid-template-rows: 1fr 34px;
    column-gap: 5px;
}

.edit{
    min-width: 0;
    min-height: 0;
    display: flex;
    flex-direction: column;
}

.overview{
    display: flex;
    height: 49px;
    flex-shrink: 0;
    margin-bottom: 5px;
    padding-top: 1px;
    background-color: #333;
}

.ov-body{
    flex: 1;
    background-color: #484848;
    border-left: 2px solid #333;
}

.ov-scroll{
    width: 10px;
    display: flex;
    flex-direction: column;
    align-items: center;
    gap: 1px;
    background-color: #1e1e1e;
    color: #777;
}

.ov-scroll i{
    width: 7px;
    height: 8px;
    margin-bottom: auto;
    background-color: #444;
}

.edit-grid{
    flex: 1;
    min-height: 0;
    display: grid;
    grid-template-columns: 199px 1fr 18px;
    grid-template-rows: minmax(0, 1fr);
}

.heads,
.timeline,
.edge{
    min-width: 0;
    min-height: 0;
    display: flex;
    flex-direction: column;
}

.ruler-heads,
.rulers,
.edge-rulers{
    display: grid;
    grid-template-rows: repeat(7, 1fr);
    height: 135px;
    flex-shrink: 0;
    font-size: 11px;
    font-weight: bold;
    color: #777;
}

.ruler-heads > div{
    display: flex;
    align-items: center;
    background-color: #262626;
    border-bottom: 1px solid #161616;
    padding-right: 6px;
}

.ruler-heads > div > span:first-child{
    width: 34px;
    padding-left: 3px;
}

.ruler-heads > .sel-ruler{
    color: #bbb;
    background-color: #2b2b2b;
}

.rh-ic{
    display: flex;
    gap: 2px;
    color: #bbb;
}

.rh-ic .i-8{
    color: #888;
}

.rh-ic.mid{
    padding-left: 10px !important;
    color: #666;
}

.add{
    margin-left: auto;
}

.mk{
    width: 14px;
    height: 14px;
    margin-left: auto;
    border: 1px solid #7c1a1a;
    background-color: #b82c2c;
    color: #ffb0b0;
}

.mk + .add{
    margin-left: 10px;
}

.view-row{
    display: flex;
    gap: 2px;
    height: 20px;
    flex-shrink: 0;
    padding: 2px 0 1px;
    color: #888;
}

.view-row > div{
    display: flex;
    align-items: center;
    background-color: #363636;
}

.vr-main{
    width: 155px;
    padding: 0 3px;
    gap: 3px;
}

.vr-main .i-8{
    margin-bottom: 5px;
}

.vr-main .cyan{
    margin-left: auto;
}

.vr-flag{
    width: 23px;
    justify-content: center;
    color: #f8c60a;
}

.vr-end{
    flex: 1;
}

.rows-clip{
    flex: 1;
    min-height: 0;
    overflow: hidden;
}

.rows{
    display: grid;
    grid-auto-rows: 1fr;
    height: 733px;
}

/* track header */
.track{
    display: flex;
    min-height: 0;
    border-bottom: 2px solid #000;
    background: linear-gradient(#2c2c2c, #343434);
}

.tstrip{
    width: 15px;
    display: flex;
    flex-direction: column;
    align-items: center;
    justify-content: space-between;
    padding: 2px 0 1px;
    background-color: #17366a;
    color: #a9b3c6;
}

.tmain{
    width: 126px;
    padding: 1px 0 0 2px;
}

.tname-row{
    display: flex;
    height: 18px;
    gap: 2px;
}

.tname{
    width: 111px;
    border: 0;
    background-color: #222;
    color: #b9b9b9;
    font-size: 14px;
    font-weight: bold;
    white-space: nowrap;
}

.armed .tname{
    background-color: #d2d2d2;
    color: #0c0c0c;
}

.tmenu{
    width: 12px;
    align-items: flex-start;
    padding-top: 3px;
    border: 0;
    background-color: #222;
}

.tbtns{
    display: flex;
    height: 17px;
    margin: 5px 0 0 4px;
}

.tbtns button{
    width: 12px;
    border: 0;
    border-right: 1px solid #303030;
    background-color: #4a4a4a;
    color: #e0e0e0;
    font-size: 11px;
    font-weight: bold;
}

.tbtns .arm{
    background-color: #4a2a2a;
}

.armed .tbtns .arm{
    background-color: #e0403c;
    color: #ffdede;
}

.tbtns .wavebtn{
    width: 34px;
    margin-left: 6px;
    border-radius: 3px;
    background-color: #585858;
}

.tbtns .read{
    width: 26px;
    margin-left: 3px;
    border-radius: 3px;
    color: #2fb060;
}

.armed .tbtns .read{
    background-color: #3a3a3a;
    color: #6c6c6c;
    font-style: italic;
}

.tmeter{
    width: 9px;
    margin: 1px 0 2px 4px;
    border: 1px solid #0a0a0a;
    background: linear-gradient(#4c0806 0 5px, #3c3604 5px 19px, #5ede20 19px 20px, #1fa30c 20px);
}

.tinfo{
    width: 28px;
    display: flex;
    flex-direction: column;
    align-items: center;
    gap: 4px;
    padding-top: 1px;
}

.tinfo span{
    display: flex;
    align-items: center;
    justify-content: center;
    width: 17px;
    height: 17px;
    border-radius: 3px;
    background-color: #4a4a4a;
    color: #bbb;
}

.tinfo span:first-child{
    width: 19px;
    height: 20px;
    border: 1px solid #777;
    background-color: #333;
}

.tscale{
    flex: 1;
    display: flex;
    justify-content: flex-end;
    align-items: center;
    border-left: 1px solid #161616;
}

.tscale svg{
    width: 12px;
    height: 42px;
}

/* timeline */
.timeline{
    position: relative;
}

.ruler{
    display: grid;
    min-width: 0;
    overflow: hidden;
    background-color: #2b2b2b;
    border-bottom: 1px solid #1c1c1c;
}

.ruler span{
    min-width: 0;
    display: flex;
    align-items: center;
    padding-left: 3px;
    border-left: 1px solid #363636;
    white-space: nowrap;
}

/* column shares are tenths of a second (thirtieths for samples) */
.bars{ grid-template-columns: repeat(19, 160fr) 47fr; }
.mins{ grid-template-columns: repeat(30, 100fr) 87fr; background-color: #3a3a3a; color: #b4b4b4; }
.mins span{ border-color: #2a2a2a; }
.tc{ grid-template-columns: repeat(10, 300fr) 87fr; }
.samples{ grid-template-columns: repeat(7, 1250fr) 511fr; }

.tempo-ruler,
.meter-ruler{
    display: flex;
    align-items: center;
    padding-left: 8px;
    background-color: #006442;
    border-color: #00523a;
    color: #53c48c;
}

.tempo-ruler svg{
    color: #fff;
    margin-right: 1px;
}

.meter-ruler{
    padding-left: 11px;
    background-color: #006177;
    color: #74bccb;
}

.rulers .ruler:last-child{
    background-color: #242424;
}

.dark-strip{
    height: 20px;
    flex-shrink: 0;
    border-top: 2px solid #0a0a0a;
    border-bottom: 1px solid #111;
    background: repeating-linear-gradient(90deg, #1a1a1a 0 1px, #242424 1px calc(1000% / 3087));
}

.lanes{
    background: repeating-linear-gradient(90deg, #3e3e3e 0 1px, #4d4d4d 1px 3px, #525252 3px calc(1000% / 3087));
}

.lane{
    min-height: 0;
    border-bottom: 2px solid #383838;
    box-shadow: inset 0 -1px #666;
    display: flex;
}

.clip{
    width: 41%;
    margin-bottom: 2px;
    display: flex;
    align-items: center;
    border: 1px solid #8a2020;
    border-width: 1px 0;
    background: repeating-linear-gradient(90deg, #f98c8c 0 1px, #ff7c7c 1px calc(100% / 127));
}

.clip i{
    flex: 1;
    height: 2px;
    margin-right: 5px;
}

.clip.audio{
    width: calc(300000% / 3087);
    flex-direction: column;
    align-items: flex-start;
    justify-content: space-between;
    margin-left: 1px;
    border: 2px solid #0c1418;
    background: repeating-linear-gradient(90deg, #3c5966 0 1px, #243b47 1px calc(100% / 300));
    color: #e4e4e4;
    font-size: 11px;
    font-weight: bold;
}

.clip.audio i{
    width: 100%;
    flex: 0 0 3px;
    background-color: #5898b4;
}

.clip.audio span{
    display: flex;
    align-items: center;
    gap: 6px;
    padding: 0 3px 0 2px;
    border-radius: 2px;
    background-color: #14242c;
}

.clip.audio svg{
    width: 8px;
    height: 11px;
}

.playhead,
.editcursor{
    position: absolute;
    top: 0;
    bottom: 0;
    left: 41%;
    width: 1px;
    background-color: #eee;
}

.editcursor{
    left: 0;
    bottom: auto;
    height: 202px;
}

.startmark,
.tempomark{
    position: absolute;
    left: 1px;
    top: 20px;
    width: 8px;
    height: 16px;
    fill: #e0281c;
}

.tempomark{
    left: 0;
    top: 82px;
    width: 5px;
    height: 12px;
}

.edge-rulers > div{
    display: flex;
    align-items: center;
    justify-content: center;
    background-color: #2b2b2b;
}

.edge-rulers .e2{ background-color: #3a3a3a; }
.edge-rulers .e-green{ background-color: #006442; }
.edge-rulers .e-teal{ background-color: #006177; }

.edge{
    gap: 1px;
    background-color: #1d1d1d;
}

.edge .az{
    width: 18px;
    height: 17px;
}

.ebtn{
    height: 22px;
    border: 0;
    background-color: #2d2d2d;
    color: #888;
}

.two{
    flex-direction: column;
    gap: 3px;
}

.two i{
    width: 7px;
    height: 2px;
    background-color: #999;
    margin-right: 4px;
}

.two i:last-child{
    margin: 0 0 0 4px;
}

.etrack{
    flex: 1;
}

.etrack i{
    display: block;
    width: 7px;
    height: 22px;
    margin: 2px auto;
    background-color: #333;
}

.hscroll{
    display: flex;
    gap: 1px;
    height: 17px;
    flex-shrink: 0;
    background-color: #1d1d1d;
}

.htrack{
    flex: 1;
    display: flex;
    align-items: center;
}

.htrack i{
    width: 71%;
    height: 8px;
    background-color: #363636;
}

.hscroll .sb{
    width: 17px;
    display: flex;
}

/* ---------- clips list ---------- */
.clips{
    min-width: 0;
    display: flex;
    flex-direction: column;
    overflow: hidden;
    background-color: #333;
}

.tabs{
    display: flex;
    gap: 2px;
    height: 25px;
    background-color: #111;
}

.tab{
    width: 51px;
    gap: 10px;
    border: 0;
    background-color: #202020;
    color: #aaa;
    font-weight: bold;
}

.tab.active{
    background-color: #333;
    color: #eee;
}

.filter{
    display: flex;
    align-items: center;
    gap: 2px;
    height: 24px;
    margin: 4px 8px 4px 6px;
    padding-left: 6px;
    border-radius: 2px;
    background-color: #1d1d1d;
    color: #999;
}

.filter input{
    width: 60px;
    margin-left: 8px;
    border: 0;
    background: none;
    color: #aaa;
    font: 13px/14px Roboto, "Liberation Sans", sans-serif;
}

.filter input::placeholder{
    color: #999;
}

.cliplist{
    flex: 1;
    background: linear-gradient(90deg, #383838 14px, #2c2c2c 14px 15px, #383838 15px 28px, #2c2c2c 28px 29px, #383838 29px 45px, #2c2c2c 45px 46px, #383838 46px 64px, #2c2c2c 64px 65px, #383838 65px);
}

.cliplist li{
    display: grid;
    grid-template-columns: 46px 39px 1fr;
    align-items: center;
    height: 12px;
    white-space: nowrap;
    color: #aaa;
}

.cliplist svg:first-child{
    margin-left: 4px;
}

.cliplist .i-10{
    color: #ddd;
    margin-left: 4px;
}

.cliplist .strong{
    font-weight: bold;
    color: #ccc;
}

.cscroll{
    display: flex;
    align-items: center;
    gap: 1px;
    height: 21px;
    background-color: #1d1d1d;
}

.cscroll i{
    width: 38px;
    height: 7px;
    margin: 0 auto 0 1px;
    background-color: #3a3a3a;
}

.docktabs{
    grid-column: 1 / -1;
    display: flex;
    margin-top: 6px;
    background-color: #0a0a0a;
    border-bottom: 2px solid #1c1c1c;
}

.docktabs button{
    gap: 8px;
    padding: 0 10px;
    width: 384px;
    justify-content: flex-end;
    border: 0;
    background-color: #161616;
    color: #777;
    font-size: 12px;
    font-weight: bold;
}

/* ---------- floating windows ---------- */
.win{
    position: absolute;
    overflow: hidden;
    border: 1px solid #555;
    border-radius: 8px;
    background-color: #141414;
    box-shadow: 0 3px 12px rgba(0, 0, 0, 0.6);
}

.win header{
    display: flex;
    align-items: center;
    gap: 7px;
    height: 21px;
    padding-left: 5px;
    background-color: #434343;
    border-bottom: 1px solid #222;
}

.win header i{
    width: 10px;
    height: 10px;
    border-radius: 50%;
    background-color: #5e5e5e;
}

.win header h3{
    flex: 1;
    padding-right: 42px;
    text-align: center;
    font: 500 13px/16px Inter, "Liberation Sans", sans-serif;
    color: #7a7a7a;
}

.usage{
    left: 951px;
    top: 450px;
    width: 404px;
}

.usage-body{
    display: flex;
    flex-direction: column;
    gap: 5px;
    padding: 5px 4px;
}

.ubox{
    width: 100%;
    height: 170px;
    border-collapse: collapse;
    table-layout: fixed;
    border-radius: 3px;
    overflow: hidden;
    background-color: #4a4a4a;
    color: #ddd;
}

.ubox.act{
    height: 52px;
}

.ubox th,
.ubox td{
    padding: 0;
    line-height: 14px;
}

.ubox th{
    width: 127px;
    font-weight: normal;
    text-align: right;
}

.ubox td:nth-child(2){
    width: 174px;
    padding: 0 11px;
}

.ubox thead tr{
    height: 17px;
    background-color: #303030;
}

.ubox thead th{
    font-weight: bold;
    text-align: left;
    padding-left: 3px;
}

.ubox thead svg{
    margin-right: 8px;
    color: #aaa;
}

.ubox thead span{
    float: right;
    font-weight: normal;
}

.ubox tbody::before,
.ubox tbody::after{
    content: "";
    display: block;
    height: 2px;
}

.bar{
    height: 10px;
    border-top: 1px solid #222;
    border-bottom: 1px solid #606060;
    background-color: #553c00;
}

.bar i{
    display: block;
    height: 100%;
    background: repeating-linear-gradient(90deg, #e9b908 0 2px, #d9aa04 2px 3px);
}

.transport{
    left: 2px;
    bottom: 3px;
    width: 392px;
    height: 138px;
    background-color: #262626;
}

.transport header{
    height: 22px;
}

.tr-body{
    display: flex;
    height: 114px;
}

.tr-main{
    flex: 1;
    padding: 11px 10px;
}

.tr-buttons{
    display: flex;
    gap: 11px;
    height: 35px;
}

.tr-buttons button{
    height: 35px;
}

.rolls{
    display: grid;
    grid-template-columns: 68px 78px 55px 102px;
    grid-auto-rows: 1fr;
    row-gap: 1px;
    align-items: center;
    width: 329px;
    height: 54px;
    margin-top: 8px;
    padding: 0 7px;
    border-width: 6px 5px;
    text-align: right;
    line-height: 13px;
}

.rolls button{
    height: 13px;
}

.tr-side{
    width: 24px;
    padding-top: 5px;
    border-left: 1px solid #1a1a1a;
}

.tr-side .round{
    width: 24px;
    height: 15px;
}
```

FILE: app.js
```
const icon = (id, cls) => `<svg class="${cls}"><use href="#${id}"/></svg>`
const fill = (id, html) => { document.getElementById(id).innerHTML = html }
const range = (n) => Array.from({ length: n }, (_, i) => i)
const pad = (n) => String(n).padStart(2, '0')

// track list
fill('tracklist', range(55).map(i => `
    <li><span class="dot"><i></i></span><span class="chipcell"><i></i></span><span class="wv">${icon('wave', 'i-10')}</span><b>${2145 + i}</b></li>`).join(''))

// rulers
const cells = (list) => list.map(t => `<span>${t}</span>`).join('')
fill('bars', cells(range(20).map(i => i * 8 + 1)))
fill('mins', cells(range(31).map(i => `${Math.floor(i / 6)}:${pad(i % 6 * 10)}`)))
fill('timecode', cells(range(11).map(i => `00:${pad(Math.floor(i / 2))}:${pad(i % 2 * 30)}:00`)))
fill('samples', cells(range(8).map(i => i * 2000000)))

// tracks
const tracks = [
    { name: 'Audio 1' },
    { name: 'Audio 2', line: '#90b058' },
    { name: 'Audio 2.dup200', line: '#8040c8' },
    { name: 'Audio 2.dup201', line: '#c65c66' },
    { name: 'Audio 2.dup202', line: '#7aa870' },
    { name: 'Audio 2.dup203', line: '#d8a048' },
    { name: 'Audio 2.dup204', line: '#7444cc' },
    { name: 'Audio 2.dup205', line: '#a84cb0' },
    { name: 'Audio 2.dup206', line: '#6078c0' },
    { name: 'Audio 2.dup207', line: '#c65c66' },
    { name: 'Audio 2.dup208', line: '#9048c0' },
    { name: 'Audio 2.dup209', line: '#74a86c' },
    { name: 'Audio 2.dup210', line: '#b84cac' },
    { name: 'Audio 2.dup211', line: '#6088c4' },
    { name: 'Audio 2.dup212', line: '#c8a844' }
]

fill('heads', tracks.map(t => `
    <div class="track ${t.line ? 'armed' : ''}">
        <div class="tstrip">${icon('menu', 'i-12')}${icon('elastic', 'i-12')}</div>
        <div class="tmain">
            <div class="tname-row"><button class="tname">${t.name}</button><button class="tmenu" aria-label="Playlists">${icon('down', 'i-8')}</button></div>
            <div class="tbtns"><button class="arm" aria-label="Record">${icon('rec', 'i-10')}</button><button>I</button><button>S</button><button>M</button><button class="wavebtn">wave</button><button class="read">read</button></div>
        </div>
        <div class="tmeter"></div>
        <div class="tinfo"><span>${icon('frame', 'i-14')}</span><span>${icon('comment', 'i-14')}</span></div>
        <div class="tscale">${icon('scale', '')}</div>
    </div>`).join(''))

fill('lanes', tracks.map(t => t.line
    ? `<div class="lane"><div class="clip"><i style="background-color:${t.line}"></i></div></div>`
    : `<div class="lane"><div class="clip audio"><span>Audio 1-SigGen_01-01</span><i></i><span>${icon('fader', '')}0 dB</span></div></div>`).join(''))

// system usage, [label, bar %, reading]
const usageRow = ([label, width, text]) => `<tr><th>${label}</th><td><div class="bar"><i style="width:${width}%"></i></div></td><td>${text}%</td></tr>`
fill('cpu', [
    [1, 68, 68], [2, 69, 70], [3, 70, 71], [4, 71, 71], [5, 72, 73],
    [6, 72, 72], [7, 70, 71], [8, 70, 70], [9, 69, 69], [10, 52, 52]
].map(usageRow).join(''))
fill('activity', [['Disk', 11, 11], ['Memory', 29, 29]].map(usageRow).join(''))
```
